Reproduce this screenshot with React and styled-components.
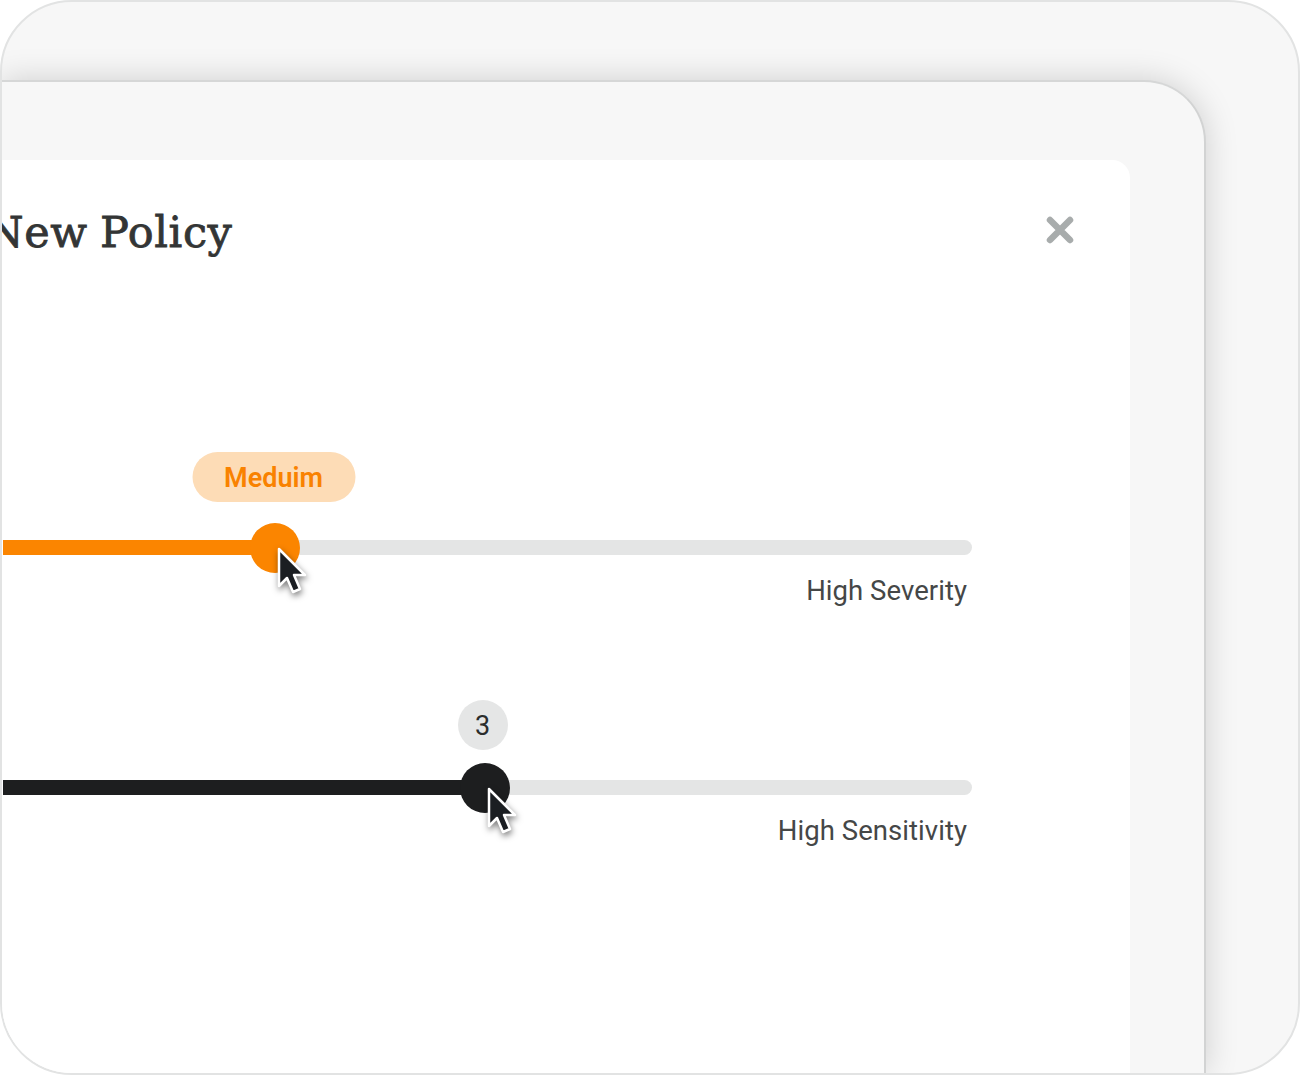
import React from "react"
import styled, { createGlobalStyle } from "styled-components"

const GlobalStyle = createGlobalStyle`
    html, body {
        margin: 0;
        padding: 0;
        background: #ffffff;
    }
    * {
        box-sizing: border-box;
    }
`

const Frame = styled.main`
    width: 1300px;
    height: 1075px;
    display: flex;
    flex-direction: column;
    padding: 78px 92px 0 0;
    background: #f7f7f7;
    border: 2px solid #e2e3e3;
    border-radius: 72px;
    overflow: hidden;
`

const Panel = styled.section`
    flex: 1;
    display: flex;
    flex-direction: column;
    padding: 78px 74px 0 0;
    background: #f7f7f7;
    border-top: 2px solid #d6d7d7;
    border-right: 2px solid #d2d3d3;
    border-top-right-radius: 62px;
    box-shadow: 0 0 32px rgba(0, 0, 0, 0.17);
`

const Modal = styled.div`
    flex: 1;
    padding: 40px 56px 0 0;
    background: #ffffff;
    border-top-right-radius: 18px;
`

const Header = styled.header`
    height: 60px;
    display: flex;
    align-items: center;
    justify-content: space-between;
`

const Title = styled.h1`
    margin: 4px 0 0 -16px;
    font-family: "DejaVu Serif", serif;
    font-size: 43px;
    font-weight: 400;
    line-height: 60px;
    letter-spacing: 0.6px;
    word-spacing: -2px;
    -webkit-text-stroke: 0.8px #333535;
    color: #333535;
`

const CloseButton = styled.button`
    display: flex;
    padding: 0;
    border: 0;
    background: none;
`

const Sliders = styled.div`
    display: flex;
    flex-direction: column;
    margin: 280px 102px 0 1px;
`

const SliderRow = styled.div`
    height: 240px;
`

const Track = styled.div`
    position: relative;
    height: 15px;
    background: #e4e5e5;
    border-radius: 0 8px 8px 0;
`

const Fill = styled.div`
    height: 100%;
    background: ${(props) => props.$color};
`

const Thumb = styled.div`
    position: absolute;
    top: 50%;
    width: 50px;
    height: 50px;
    margin: -25px 0 0 -25px;
    border-radius: 50%;
    background: ${(props) => props.$color};
`

const Pill = styled.div`
    position: absolute;
    height: 50px;
    display: flex;
    align-items: center;
    justify-content: center;
    padding-top: 2px;
    transform: translateX(-50%);
    border-radius: 25px;
    font-family: Roboto, sans-serif;
`

const SeverityPill = styled(Pill)`
    bottom: 53px;
    width: 163px;
    background: #fddcb6;
    color: #f98200;
    font-size: 27px;
    font-weight: 600;
`

const ValuePill = styled(Pill)`
    bottom: 45px;
    width: 50px;
    background: #e5e6e6;
    color: #2b2d2d;
    font-size: 27px;
    font-weight: 400;
`

const Pointer = styled.svg`
    position: absolute;
    top: 50%;
    width: 34px;
    height: 50px;
    margin: -2px 0 0 -2px;
    overflow: visible;
    filter: drop-shadow(1px 3px 3px rgba(0, 0, 0, 0.5));
`

const EndLabel = styled.div`
    margin-top: 19px;
    padding-right: 5px;
    text-align: right;
    font-family: Roboto, sans-serif;
    font-size: 27.5px;
    line-height: 34px;
    letter-spacing: 0.05px;
    color: #454747;
`

const Cursor = ({ left }) => (
    <Pointer viewBox="0 0 34 50" style={{ left }}>
        <path
            d="M3 3 L3 40 L11 32 L17 46 L24 43 L18 29 L29 29 Z"
            fill="#1b1e22"
            stroke="#ffffff"
            strokeWidth="2.5"
            strokeLinejoin="round"
        />
    </Pointer>
)

const Slider = ({ value, color, bubble, label }) => (
    <SliderRow>
        <Track>
            <Fill $color={color} style={{ width: value }} />
            <Thumb $color={color} style={{ left: value }} />
            {bubble(value)}
            <Cursor left={value + 3} />
        </Track>
        <EndLabel>{label}</EndLabel>
    </SliderRow>
)

const App = () => (
    <>
        <GlobalStyle />
        <Frame>
            <Panel>
                <Modal>
                    <Header>
                        <Title>New Policy</Title>
                        <CloseButton aria-label="Close">
                            <svg width="28" height="28" viewBox="0 0 28 28">
                                <path
                                    d="M4 4 L24 24 M24 4 L4 24"
                                    stroke="#a8acac"
                                    strokeWidth="6.5"
                                    strokeLinecap="round"
                                />
                            </svg>
                        </CloseButton>
                    </Header>
                    <Sliders>
                        <Slider
                            value={272}
                            color="#fb8500"
                            label="High Severity"
                            bubble={(left) => <SeverityPill style={{ left: left - 1.5 }}>Meduim</SeverityPill>}
                        />
                        <Slider
                            value={482}
                            color="#1d1e1f"
                            label="High Sensitivity"
                            bubble={(left) => <ValuePill style={{ left: left - 2.5 }}>3</ValuePill>}
                        />
                    </Sliders>
                </Modal>
            </Panel>
        </Frame>
    </>
)

export default App
